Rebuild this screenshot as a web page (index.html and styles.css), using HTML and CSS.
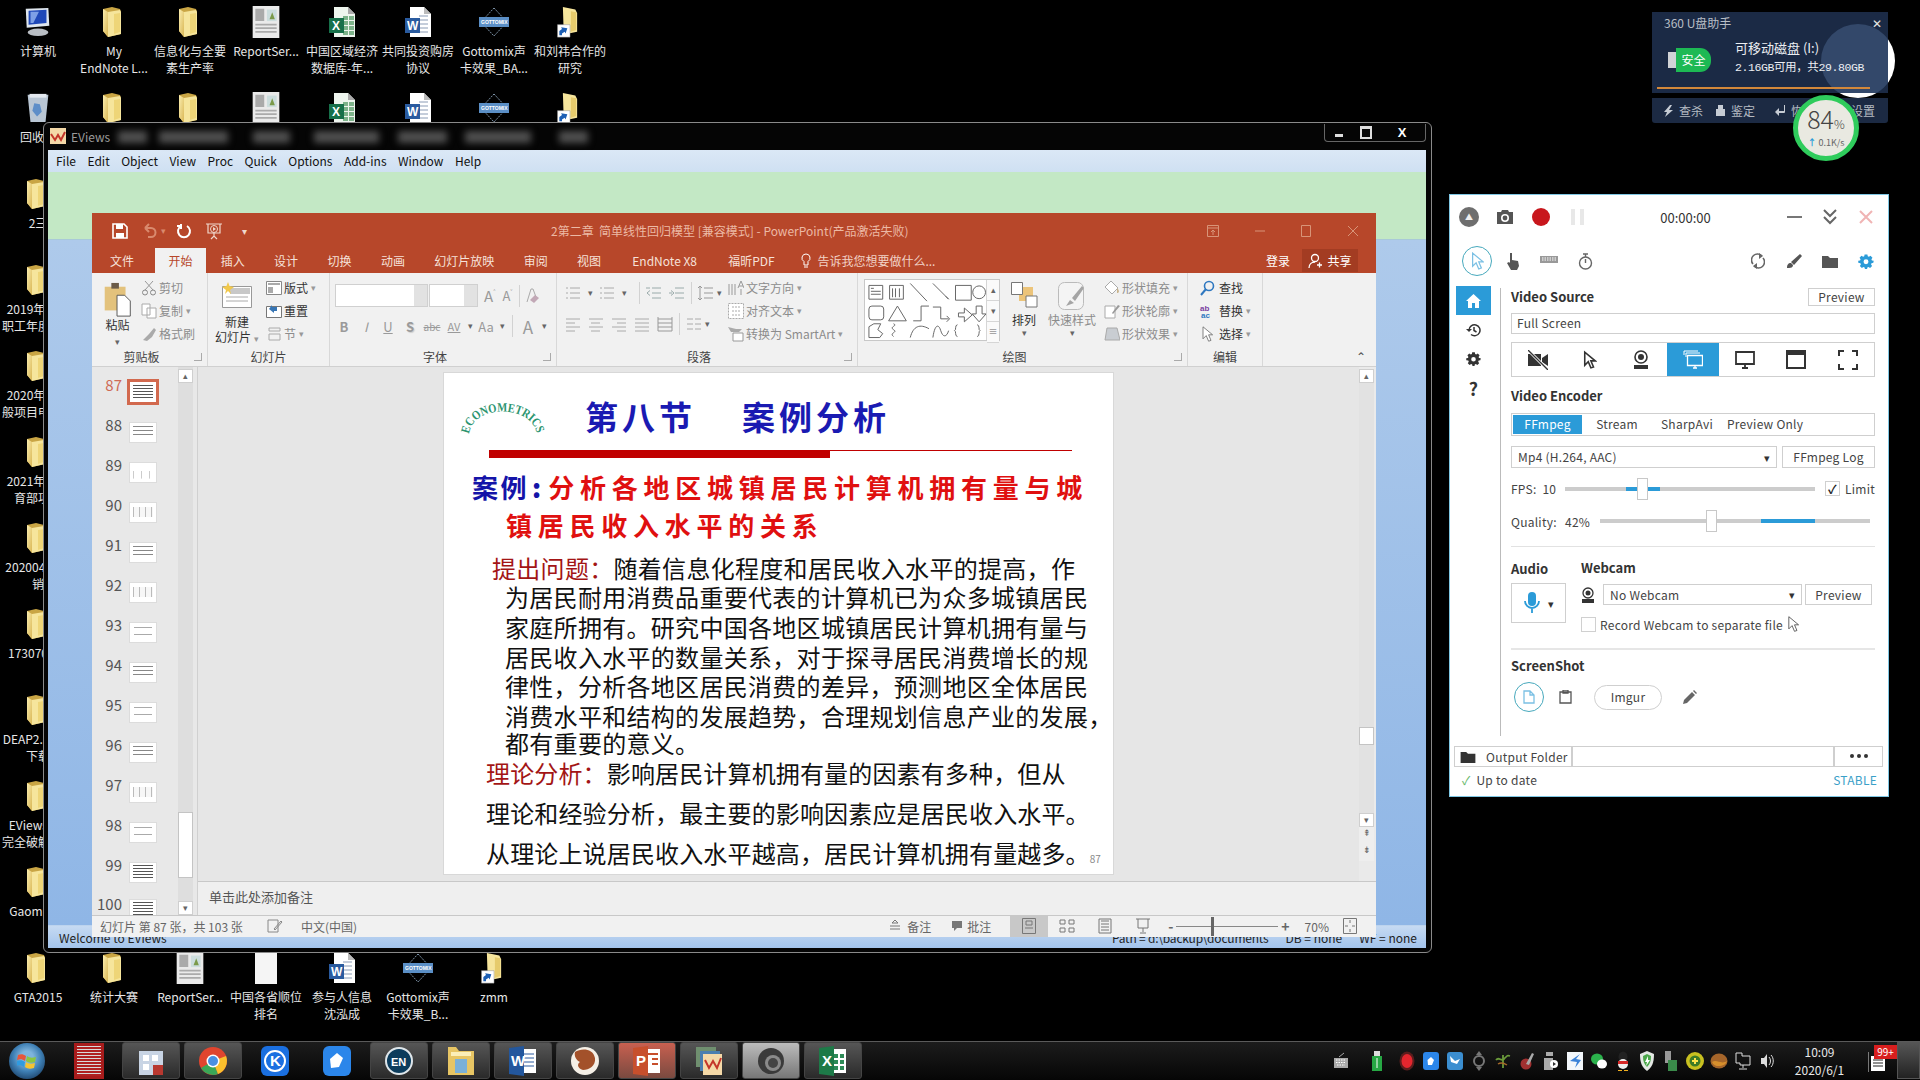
FILE: index.html
```html
<!DOCTYPE html>
<html lang="zh-CN">
<head>
<meta charset="utf-8">
<title>Desktop</title>
<link rel="stylesheet" href="styles.css">
</head>
<body>
<svg class="sprite" width="0" height="0">
  <defs>
    <linearGradient id="fg" x1="0" y1="0" x2="1" y2="1"><stop offset="0" stop-color="#fbeeb0"/><stop offset="1" stop-color="#d9b654"/></linearGradient>
    <symbol id="folder" viewBox="2 0 24 32"><path d="M3 3 12 1l8 2 1 3v22l-13 3-5-6z" fill="#c9a544"/><path d="M3 3l5 3v25l-5-6z" fill="url(#fg)"/><path d="M8 6l12-2 1 2v22L8 31z" fill="#f6e59c"/><path d="M14 8l6-1v19l-6 2z" fill="#eed578"/></symbol>
    <symbol id="flink" viewBox="0 0 30 36"><path d="M7 1l14 3 2 4v21l-15 3z" fill="#f6e59c"/><path d="M16 6l6 1v20l-6 2z" fill="#e6cb6c"/><path d="M1 21h14v14H1z" fill="#fff" stroke="#999" stroke-width=".6"/><path d="M3 33V28l3-2-1-2 7 1-2 6-1-2-3 2v2z" fill="#1d5fb4"/></symbol>
    <symbol id="word" viewBox="0 0 28 32"><path d="M6 1h14l7 7v23H6z" fill="#fff"/><path d="M20 1v7h7z" fill="#bbb"/><path d="M15 10h9M15 14h9M15 18h9M15 22h9M15 26h9" stroke="#8a9bb5"/><path d="M1 12h15v15H1z" fill="#2a5b9f"/><text x="3" y="24" class="svg-w">W</text></symbol>
    <symbol id="excel" viewBox="0 0 28 32"><path d="M6 1h14l7 7v23H6z" fill="#eef5ee"/><path d="M20 1v7h7z" fill="#aaa"/><path d="M15 10h5v4h-5zM21 10h5v4h-5zM15 15h5v4h-5zM21 15h5v4h-5zM15 20h5v4h-5zM21 20h5v4h-5zM15 25h5v4h-5zM21 25h5v4h-5z" fill="#7db38a"/><path d="M1 12h15v15H1z" fill="#17704a"/><text x="4" y="24" class="svg-w">X</text></symbol>
    <symbol id="report" viewBox="0 0 30 36"><path d="M0 0h30v36H0z" fill="#eaeaea"/><path d="M3 3h10v14H3zM3 20h24v2H3zM3 24h24v2H3zM3 28h24v2H3z" fill="#aaa"/><path d="M16 4h11v13H16z" fill="#cdd"/><path d="M19 15l3-8 3 8z" fill="#7b9a4a"/></symbol>
    <symbol id="gotto" viewBox="0 0 32 32"><path d="M16 2l13 14-13 14L3 16z" fill="none" stroke="#7d93a8" stroke-dasharray="2 1"/><path d="M1 11h30v10H1z" fill="#5b8fc6"/><text x="3" y="18" class="svg-g">GOTTOMIX</text></symbol>
    <symbol id="ic-cam" viewBox="0 0 20 20"><path d="M2 5h4l1-2h6l1 2h4v12H2z" fill="#555"/><circle cx="10" cy="11" r="4" fill="#fff"/><circle cx="10" cy="11" r="2.400" fill="#555"/></symbol>
    <symbol id="arrow" viewBox="0 0 16 20"><path d="M3 1v15l4-4 3 7 3-1-3-7h5z" fill="#fff" stroke="currentColor" stroke-width="1.400"/></symbol>
    <symbol id="gear" viewBox="0 0 20 20"><path fill="currentColor" fill-rule="evenodd" d="M8 1h4l.5 2.600 1.600.7L16.400 2.800l2.800 2.800-1.500 2.300.7 1.600L21 10l-.6 3-2.600.5-.7 1.600 1.500 2.300-2.800 2.800-2.300-1.500-1.600.7L11.500 22h-3l-.5-2.600-1.600-.7-2.300 1.500-2.800-2.800 1.500-2.300-.7-1.600L-1 13v-3l2.600-.5.7-1.600L.8 5.600 3.600 2.800l2.300 1.500 1.600-.7zM10 8a3.500 3.500 0 1 0 0 7 3.500 3.500 0 0 0 0-7z" transform="translate(1.200 .9) scale(.88)"/></symbol>
  </defs>
</svg>

<main class="screen">
  <section class="desktop">
    <div class="dicon"><svg class="di" viewBox="0 0 34 32"><path d="M4 2l24-1 1 19-24 2z" fill="#dfe6ee"/><path d="M7 4l19-1v14L7 19z" fill="#1f48b8"/><path d="M9 5l9 0-6 12H9z" fill="#7ea0e6"/><ellipse cx="17" cy="27" rx="11" ry="4" fill="#b9bec4"/></svg><span>计算机</span></div>
    <div class="dicon"><svg class="di"><use href="#folder"/></svg><span>My<br>EndNote L...</span></div>
    <div class="dicon"><svg class="di"><use href="#folder"/></svg><span>信息化与全要<br>素生产率</span></div>
    <div class="dicon"><svg class="di"><use href="#report"/></svg><span>ReportSer...</span></div>
    <div class="dicon"><svg class="di"><use href="#excel"/></svg><span>中国区域经济<br>数据库-年...</span></div>
    <div class="dicon"><svg class="di"><use href="#word"/></svg><span>共同投资购房<br>协议</span></div>
    <div class="dicon"><svg class="di"><use href="#gotto"/></svg><span>Gottomix声<br>卡效果_BA...</span></div>
    <div class="dicon"><svg class="di"><use href="#flink"/></svg><span>和刘祎合作的<br>研究</span></div>

    <div class="dicon"><svg class="di" viewBox="0 0 26 34"><path d="M2 3h22l-3 29H5z" fill="#b9c6d4"/><path d="M4 2h18v4H4z" fill="#e4e9ef"/><path d="M9 12l6 1 2 8-5 5-5-6z" fill="#5e8ec8"/></svg><span>回收站</span></div>
    <div class="dicon"><svg class="di"><use href="#folder"/></svg></div>
    <div class="dicon"><svg class="di"><use href="#folder"/></svg></div>
    <div class="dicon"><svg class="di"><use href="#report"/></svg></div>
    <div class="dicon"><svg class="di"><use href="#excel"/></svg></div>
    <div class="dicon"><svg class="di"><use href="#word"/></svg></div>
    <div class="dicon"><svg class="di"><use href="#gotto"/></svg></div>
    <div class="dicon"><svg class="di"><use href="#flink"/></svg></div>

    <div class="dicon c1"><svg class="di"><use href="#folder"/></svg><span>2三</span></div>
    <div class="dicon c1"><svg class="di"><use href="#folder"/></svg><span>2019年度教<br>职工年度考核</span></div>
    <div class="dicon c1"><svg class="di"><use href="#folder"/></svg><span>2020年度一<br>般项目申报书</span></div>
    <div class="dicon c1"><svg class="di"><use href="#folder"/></svg><span>2021年度教<br>育部项目</span></div>
    <div class="dicon c1"><svg class="di"><use href="#folder"/></svg><span>20200403销<br>销</span></div>
    <div class="dicon c1"><svg class="di"><use href="#folder"/></svg><span>173070012</span></div>
    <div class="dicon c1"><svg class="di"><use href="#folder"/></svg><span>DEAP2.1 Win<br>下载</span></div>
    <div class="dicon c1"><svg class="di"><use href="#folder"/></svg><span>EViews 9.0<br>完全破解版本</span></div>
    <div class="dicon c1"><svg class="di"><use href="#folder"/></svg><span>Gaomin20</span></div>

    <div class="dicon r12"><svg class="di"><use href="#folder"/></svg><span>GTA2015</span></div>
    <div class="dicon r12"><svg class="di"><use href="#folder"/></svg><span>统计大赛</span></div>
    <div class="dicon r12"><svg class="di"><use href="#report"/></svg><span>ReportSer...</span></div>
    <div class="dicon r12"><svg class="di" viewBox="0 0 24 32"><path d="M1 0h22v32H1z" fill="#f5f5f5"/></svg><span>中国各省顺位<br>排名</span></div>
    <div class="dicon r12"><svg class="di"><use href="#word"/></svg><span>参与人信息<br>沈泓成</span></div>
    <div class="dicon r12"><svg class="di"><use href="#gotto"/></svg><span>Gottomix声<br>卡效果_B...</span></div>
    <div class="dicon r12"><svg class="di"><use href="#flink"/></svg><span>zmm</span></div>
  </section>

  <!-- 360 widget -->
  <aside class="u360">
    <div class="u360-halo"></div>
    <div class="u360-top">
      <div class="u360-glass"></div>
      <div class="u360-title"><span>360 U盘助手</span><span class="u360-close">✕</span></div>
      <div class="u360-info">
        <div class="u360-badge"><i class="u360-plug"></i><b>安全</b></div>
        <div class="u360-disk"><p>可移动磁盘 (I:)</p><p class="u360-size">2.16GB可用，共29.80GB</p></div>
      </div>
      <div class="u360-bar"></div>
    </div>
    <div class="u360-bottom">
      <span class="ub-a"><svg width="9" height="12" viewBox="0 0 9 12"><path d="M6 0L0 7h3l-2 5 8-7H5l3-5z" fill="#c6ccd4"/></svg>查杀</span>
      <span class="ub-b"><svg width="9" height="11" viewBox="0 0 9 11"><path d="M2 0h5v4H2zM0 4h9v7H0z" fill="#c6ccd4"/></svg>鉴定</span>
      <span class="ub-c"><svg width="10" height="11" viewBox="0 0 10 11"><path d="M9 0v6H4V3L0 7l4 4V8h5a1 1 0 0 0 1-1V0z" fill="#c6ccd4"/></svg>恢复</span>
      <span class="ub-d">设置</span>
    </div>
    <div class="ball">
      <div class="ball-pct">84<small>%</small></div>
      <div class="ball-speed"><em>↑</em> 0.1K/s</div>
    </div>
  </aside>

  <!-- EViews window -->
  <section class="eviews">
    <header class="ev-title">
      <svg class="ev-logo" viewBox="0 0 16 16"><path d="M0 0h16v16H0z" fill="#f4d9a8"/><path d="M1 6l4 6 3-5 3 5 4-8" fill="none" stroke="#c4352a" stroke-width="2"/></svg>
      <span class="ev-name">EViews</span>
      <div class="ev-blurs"><i class="b1"></i><i class="b2"></i><i class="b3"></i><i class="b4"></i><i class="b5"></i><i class="b6"></i><i class="b7"></i></div>
      <div class="ev-ctrls"><span class="c-min"></span><span class="c-max"></span><span class="c-x">X</span></div>
    </header>
    <div class="ev-client">
      <nav class="ev-menu"><span>File</span><span>Edit</span><span>Object</span><span>View</span><span>Proc</span><span>Quick</span><span>Options</span><span>Add-ins</span><span>Window</span><span>Help</span></nav>
      <div class="ev-green"></div>
      <div class="ev-blue"></div>
      <footer class="ev-status"><span class="ev-s0">Welcome to EViews</span><span class="ev-s1">Path = d:\backup\documents</span><span class="ev-s2">DB = none</span><span class="ev-s3">WF = none</span></footer>
    </div>
  </section>

  <!-- PowerPoint window -->
  <section class="ppt">
    <header class="pp-title">
      <span class="qat"><svg width="16" height="16" viewBox="0 0 16 16"><path d="M1 1h11l3 3v11H1z" fill="none" stroke="#fff" stroke-width="1.600"/><path d="M4 1h7v5H4zM4 10h8v5H4z" fill="#fff"/></svg></span>
      <span class="qat dim"><svg width="16" height="16" viewBox="0 0 16 16"><path d="M3 5h6a4 4 0 0 1 0 9H6M3 5l4-4M3 5l4 4" fill="none" stroke="#d98a6e" stroke-width="2"/></svg><i class="qat-c">▾</i></span>
      <span class="qat"><svg width="16" height="16" viewBox="0 0 16 16"><path d="M11 3a6 6 0 1 1-6 0M5 1v5M1 3h5" fill="none" stroke="#fff" stroke-width="2"/></svg></span>
      <span class="qat"><svg width="18" height="18" viewBox="0 0 18 18"><path d="M1 2h16M3 2v9h12V2M9 11v3M6 17l3-3 3 3" fill="none" stroke="#f0d8cc" stroke-width="1.200"/><circle cx="9" cy="7" r="3.500" fill="none" stroke="#f0d8cc"/><path d="M8 5l3 2-3 2z" fill="#f0d8cc"/></svg></span>
      <span class="qat qat-more">▾</span>
      <h1 class="pp-doc">2第二章&nbsp; 简单线性回归模型 [兼容模式] - PowerPoint(产品激活失败)</h1>
      <div class="pp-ctrls">
        <span><svg width="12" height="12" viewBox="0 0 12 12"><path d="M.5.500h11v11H.5zM.5 3h11M6 10V5M4 7l2-2 2 2" fill="none" stroke="#d89478"/></svg></span>
        <span><svg width="12" height="12" viewBox="0 0 12 12"><path d="M1 6h10" stroke="#d89478"/></svg></span>
        <span><svg width="12" height="12" viewBox="0 0 12 12"><path d="M1.500.5h9v11h-9z" fill="none" stroke="#d89478"/></svg></span>
        <span><svg width="12" height="12" viewBox="0 0 12 12"><path d="M1 1l10 10M11 1L1 11" stroke="#d89478"/></svg></span>
      </div>
    </header>
    <nav class="pp-tabs">
      <span class="tab tab-file">文件</span><span class="tab tab-on">开始</span><span class="tab">插入</span><span class="tab">设计</span><span class="tab">切换</span><span class="tab">动画</span><span class="tab">幻灯片放映</span><span class="tab">审阅</span><span class="tab">视图</span><span class="tab tab-en">EndNote X8</span><span class="tab">福昕PDF</span>
      <span class="tell"><svg width="10" height="16" viewBox="0 0 10 16"><path d="M5 1a4 4 0 0 0-2 7.500V12h4V8.500A4 4 0 0 0 5 1zM3 14h4" fill="none" stroke="#fff"/></svg>告诉我您想要做什么...</span>
      <span class="login">登录</span>
      <span class="share"><svg width="14" height="16" viewBox="0 0 14 16"><circle cx="7" cy="5" r="3.500" fill="none" stroke="#fff" stroke-width="1.300"/><path d="M1 15c0-4 3-6 6-6M9 12h5M11.500 9.500v5" fill="none" stroke="#fff" stroke-width="1.300"/></svg>共享</span>
    </nav>

    <div class="ribbon">
      <div class="grp g1">
        <div class="grp-body">
          <div class="bigbtn paste">
            <svg width="29" height="38" viewBox="0 0 29 38"><path d="M1 5h22v25H1z" fill="#e3c27c"/><path d="M8 1h8v6H8z" fill="#6b5b48"/><path d="M14 14h8l6 6v16H14z" fill="#fff" stroke="#555"/></svg>
            <span class="blk">粘贴</span><i class="caret">▾</i>
          </div>
          <div class="rcol">
            <div class="rrow"><svg class="sic" viewBox="0 0 16 16"><path d="M4 1l8 9M12 1L4 10" stroke="#999" fill="none"/><circle cx="4" cy="12.500" r="2.500" fill="none" stroke="#888"/><circle cx="12" cy="12.500" r="2.500" fill="none" stroke="#888"/></svg>剪切</div>
            <div class="rrow"><svg class="sic" viewBox="0 0 16 16"><path d="M1 1h8v11H1zM6 5h9v10H6z" fill="#fff" stroke="#aaa"/></svg>复制<i class="caret side">▾</i></div>
            <div class="rrow"><svg class="sic" viewBox="0 0 16 16"><path d="M2 14l6-6 3 3-5 4zM8 8l5-6 2 2-4 7z" fill="#aaa"/></svg>格式刷</div>
          </div>
        </div>
        <div class="grp-label shifted">剪贴板<i class="launch"></i></div>
      </div>
      <div class="grp g2">
        <div class="grp-body">
          <div class="bigbtn newslide">
            <svg width="30" height="26" viewBox="0 0 30 26"><path d="M.5 4.500h29v21H.5z" fill="#fff" stroke="#999"/><path d="M8 6h20v6H8z" fill="#c8c8c8"/><path d="M4 15h22M4 19h22" stroke="#aaa"/><path d="M6 0l1.500 4L12 5 8 8 9 12 6 9 3 12l1-4L0 5l4.500-1z" fill="#f1c84b"/></svg>
            <span class="blk two">新建<br>幻灯片<i class="caret side">▾</i></span>
          </div>
          <div class="rcol">
            <div class="rrow blk"><svg class="sic" viewBox="0 0 16 16"><path d="M.5 1.500h15v13H.5z" fill="#fff" stroke="#888"/><path d="M2 3h12v2H2zM2 7h5v6H2z" fill="#aaa"/></svg>版式<i class="caret side">▾</i></div>
            <div class="rrow blk"><svg class="sic" viewBox="0 0 16 16"><path d="M.5 3.500h15v11H.5z" fill="#fff" stroke="#777"/><path d="M3 6l3-4v2h5v4H8v2z" fill="#3775b4"/></svg>重置</div>
            <div class="rrow"><svg class="sic" viewBox="0 0 16 16"><path d="M3 2h11v3H3zM3 8h11v6H3z" fill="none" stroke="#aaa"/></svg>节<i class="caret side">▾</i></div>
          </div>
        </div>
        <div class="grp-label">幻灯片</div>
      </div>
      <div class="grp g3">
        <div class="grp-body col">
          <div class="fontrow">
            <span class="fbox fname"><i></i></span><span class="fbox fsize"><i></i></span>
            <span class="fa a-up">A<sup>˄</sup></span><span class="fa a-dn">A<sup>˅</sup></span><span class="vsep s1"></span>
            <svg class="clear" width="16" height="16" viewBox="0 0 16 16"><path d="M3 14L7 1h2l3 8" fill="none" stroke="#aaa"/><path d="M6 12l5-5 4 3-5 5z" fill="#c2a8b6"/></svg>
          </div>
          <div class="stylerow">
            <b class="cell">B</b><i class="cell italic">I</i><u class="cell">U</u><span class="cell sh">S</span><span class="cell abc">abc</span><span class="cell av">AV</span><i class="caret w10">▾</i><span class="cell">Aa</span><i class="caret w10">▾</i><span class="vsep s2"></span><span class="cell big">A</span><i class="caret w10">▾</i>
          </div>
        </div>
        <div class="grp-label shifted">字体<i class="launch"></i></div>
      </div>
      <div class="grp g4">
        <div class="grp-body">
          <div class="col paraleft">
            <div class="pararow one">
              <svg class="pic" viewBox="0 0 16 16"><path d="M1 3h2M1 8h2M1 13h2M5 3h10M5 8h10M5 13h10" stroke="#aaa" fill="none"/></svg><i class="caret w14">▾</i>
              <svg class="pic" viewBox="0 0 16 16"><path d="M1 3h2M1 8h2M1 13h2M5 3h10M5 8h10M5 13h10" stroke="#aaa" fill="none"/></svg><i class="caret w14">▾</i>
              <span class="vsep"></span>
              <svg class="pic" viewBox="0 0 16 16"><path d="M6 3h9M6 8h9M6 13h9M0 3h4M4 5.500L1 8l3 2.500" stroke="#9aa" fill="none"/></svg>
              <svg class="pic m7" viewBox="0 0 16 16"><path d="M6 3h9M6 8h9M6 13h9M0 8h3M2 5.500L5 8l-3 2.500" stroke="#9aa" fill="none"/></svg>
              <span class="vsep"></span>
              <svg class="pic" viewBox="0 0 16 16"><path d="M6 3h9M6 8h9M6 13h9M2 1v14M0 3l2-2 2 2M0 13l2 2 2-2" stroke="#999" fill="none"/></svg><i class="caret w10">▾</i>
            </div>
            <div class="pararow two">
              <svg class="pic" viewBox="0 0 16 16"><path d="M1 3h14M1 7h9M1 11h14M1 15h9" stroke="#aaa"/></svg>
              <svg class="pic m7" viewBox="0 0 16 16"><path d="M1 3h14M3 7h9M1 11h14M3 15h9" stroke="#aaa"/></svg>
              <svg class="pic m7" viewBox="0 0 16 16"><path d="M1 3h14M6 7h9M1 11h14M6 15h9" stroke="#aaa"/></svg>
              <svg class="pic m7" viewBox="0 0 16 16"><path d="M1 3h14M1 7h14M1 11h14M1 15h14" stroke="#aaa"/></svg>
              <svg class="pic m7" viewBox="0 0 16 16"><path d="M1 3h14M1 7h14M1 11h14M1 15h14M1 1v14M15 1v14" stroke="#999"/></svg>
              <span class="vsep"></span>
              <svg class="pic" viewBox="0 0 16 16"><path d="M1 3h6M9 3h6M1 8h6M9 8h6M1 13h6M9 13h6" stroke="#aaa"/></svg><i class="caret w10">▾</i>
            </div>
          </div>
          <div class="rcol textcol">
            <div class="rrow"><svg class="sic" viewBox="0 0 16 16"><path d="M1 4v11M4 4v11M7 4v11M10 8l3-7 3 7M11 6h4M13 9v6" stroke="#999" fill="none"/></svg>文字方向<i class="caret side">▾</i></div>
            <div class="rrow"><svg class="sic" viewBox="0 0 16 16"><path d="M.5.500h15v15H.5zM4 4h8M4 8h8M4 12h8" fill="#fff" stroke="#aaa" stroke-dasharray="2 1"/></svg>对齐文本<i class="caret side">▾</i></div>
            <div class="rrow"><svg class="sic" viewBox="0 0 16 16"><path d="M0 1l8 2 6 0-3 3H3z" fill="#aaa"/><path d="M5 7h10v8H5z" fill="#fff" stroke="#999"/></svg>转换为 SmartArt<i class="caret side">▾</i></div>
          </div>
        </div>
        <div class="grp-label shifted">段落<i class="launch"></i></div>
      </div>
      <div class="grp g5">
        <div class="grp-body">
          <div class="gallery">
            <svg class="gal-svg" width="121" height="60" viewBox="0 0 123 60" fill="none" stroke="#666">
              <path d="M4 5h14v14H4zM6 8h3M6 11h10M6 14h10" /><path d="M25 5h14v14H25zM28 8v9M31 8v9M35 8v9"/><path d="M46 3l17 18M69 3l16 16M85 19l-3-3" /><path d="M92 5h16v15H92z"/><circle cx="116" cy="12" r="6.500"/>
              <rect x="4" y="26" width="15" height="14" rx="3"/><path d="M24 41l9-15 9 15zM49 41h8V26h8M69 27h8v12h8M83 36l3 3-3 3M95 33h6v-5l8 7-8 7v-5h-6zM113 26h6v8h4l-7 8-7-8h4z"/>
              <path d="M4 58V47l5-3h7l-3 6 5 4-3 4zM29 44c5 2-5 3 0 6s-5 3 0 7M46 58c3-12 10-14 19-9M69 58c2-14 6-14 8-7s6 7 8 0M94 45c-3 0-1 6-3 6 2 0 0 6 3 6M114 45c3 0 1 6 3 6-2 0 0 6-3 6"/>
            </svg>
            <div class="gscroll"><span>▴</span><span>▾</span><span>≡</span></div>
          </div>
          <div class="bigbtn arrange">
            <svg width="27" height="26" viewBox="0 0 27 26"><path d="M8 5h14v14H8z" fill="#ecc47a"/><path d="M.5.500h11v12H.5zM15 14h11v11H15z" fill="#fff" stroke="#777"/></svg>
            <span class="blk">排列</span><i class="caret">▾</i>
          </div>
          <div class="bigbtn quick">
            <svg width="28" height="28" viewBox="0 0 28 28"><rect x=".5" y=".5" width="25" height="27" rx="6" fill="#f4f4f4" stroke="#bbb"/><path d="M8 24l4-6 4 3zM14 16l10-12 2 2-9 13z" fill="#a5a5a5"/></svg>
            <span>快速样式</span><i class="caret">▾</i>
          </div>
          <div class="rcol shapecol">
            <div class="rrow"><svg class="sic" viewBox="0 0 16 16"><path d="M7 1l7 7-6 6-7-7z" fill="#fff" stroke="#aaa"/><path d="M13 8c3 3 2 5 0 5z" fill="#c9b48c"/></svg>形状填充<i class="caret side">▾</i></div>
            <div class="rrow"><svg class="sic" viewBox="0 0 16 16"><path d="M1 3h10v12H1z" fill="#fff" stroke="#aaa"/><path d="M8 10l6-8 2 1-7 8z" fill="#999"/></svg>形状轮廓<i class="caret side">▾</i></div>
            <div class="rrow"><svg class="sic" viewBox="0 0 16 16"><path d="M3 2h10l3 12H1z" fill="#c9cdd2" stroke="#aaa"/></svg>形状效果<i class="caret side">▾</i></div>
          </div>
        </div>
        <div class="grp-label shifted">绘图<i class="launch"></i></div>
      </div>
      <div class="grp g6">
        <div class="grp-body">
          <div class="rcol">
            <div class="rrow blk"><svg class="sic n" viewBox="0 0 16 16"><circle cx="10" cy="6" r="4.500" fill="none" stroke="#2f78c0" stroke-width="1.600"/><path d="M7 9l-5 6" stroke="#2f78c0" stroke-width="2"/></svg>查找</div>
            <div class="rrow blk"><svg class="sic n" viewBox="0 0 16 16"><text x="1" y="8" class="svg-ab">ab</text><text x="2" y="15" class="svg-ac">ac</text></svg>替换<i class="caret side">▾</i></div>
            <div class="rrow blk"><svg class="sic n" viewBox="0 0 16 20"><path d="M3 1v15l4-4 3 7 3-1-3-7h5z" fill="#fff" stroke="#666"/></svg>选择<i class="caret side">▾</i></div>
          </div>
        </div>
        <div class="grp-label">编辑</div>
      </div>
      <div class="collapse">⌃</div>
    </div>

    <div class="pp-work">
      <div class="thumbs">
        <div class="thumb-list">
          <div class="trow on"><b>87</b><span class="tmb t-dense"></span></div>
          <div class="trow"><b>88</b><span class="tmb t-text"></span></div>
          <div class="trow"><b>89</b><span class="tmb t-chart"></span></div>
          <div class="trow"><b>90</b><span class="tmb t-table"></span></div>
          <div class="trow"><b>91</b><span class="tmb t-text"></span></div>
          <div class="trow"><b>92</b><span class="tmb t-table"></span></div>
          <div class="trow"><b>93</b><span class="tmb t-few"></span></div>
          <div class="trow"><b>94</b><span class="tmb t-text"></span></div>
          <div class="trow"><b>95</b><span class="tmb t-few"></span></div>
          <div class="trow"><b>96</b><span class="tmb t-text"></span></div>
          <div class="trow"><b>97</b><span class="tmb t-table"></span></div>
          <div class="trow"><b>98</b><span class="tmb t-few"></span></div>
          <div class="trow"><b>99</b><span class="tmb t-dense"></span></div>
          <div class="trow last"><b>100</b><span class="tmb t-dense"></span></div>
        </div>
        <div class="vscroll">
          <span class="sbtn">▴</span>
          <div class="strack"><i class="sthumb"></i></div>
          <span class="sbtn">▾</span>
        </div>
      </div>
      <div class="pp-right">
        <div class="canvas">
          <article class="slide">
            <div class="s-head">
              <svg class="s-arc" width="76" height="34" viewBox="0 0 76 34"><path id="arcp" d="M4 32C8 2 66 2 72 32" fill="none"/><text class="svg-arc"><textPath href="#arcp" textLength="88" lengthAdjust="spacingAndGlyphs">ECONOMETRICS</textPath></text></svg>
              <h2 class="s-title"><span>第八节</span><span>案例分析</span></h2>
            </div>
            <div class="s-rule"><i></i><em></em></div>
            <div class="s-case"><span class="s-blue">案例</span><b class="s-colon">:</b><span class="s-red">分析各地区城镇居民计算机拥有量与城</span></div>
            <div class="s-case two"><span class="s-red">镇居民收入水平的关系</span></div>
            <div class="s-body">
              <p class="first"><span class="s-dark">提出问题：</span>随着信息化程度和居民收入水平的提高，作</p>
              <p>为居民耐用消费品重要代表的计算机已为众多城镇居民</p>
              <p>家庭所拥有。研究中国各地区城镇居民计算机拥有量与</p>
              <p>居民收入水平的数量关系，对于探寻居民消费增长的规</p>
              <p>律性，分析各地区居民消费的差异，预测地区全体居民</p>
              <p>消费水平和结构的发展趋势，合理规划信息产业的发展，</p>
              <p class="tight">都有重要的意义。</p>
            </div>
            <div class="s-theory">
              <p><span class="s-dark">理论分析：</span>影响居民计算机拥有量的因素有多种，但从</p>
              <p>理论和经验分析，最主要的影响因素应是居民收入水平。</p>
              <p>从理论上说居民收入水平越高，居民计算机拥有量越多。<small>87</small></p>
            </div>
          </article>
          <div class="vscroll main-scroll">
            <span class="sbtn">▴</span>
            <div class="strack light"><i class="sthumb small"></i></div>
            <span class="sbtn">▾</span>
            <span class="sbtn flat">⇞</span>
            <span class="sbtn flat">⇟</span>
          </div>
        </div>
        <div class="notes">单击此处添加备注</div>
      </div>
    </div>

    <footer class="pp-status">
      <span class="st-a">幻灯片 第 87 张，共 103 张</span>
      <svg class="st-b" width="16" height="14" viewBox="0 0 16 14"><path d="M1 1h10v12H1zM7 10l7-8 1 1-7 8z" fill="none" stroke="#888"/></svg>
      <span class="st-c">中文(中国)</span>
      <span class="st-note"><svg width="10" height="12" viewBox="0 0 10 12"><path d="M5 0L2 3h6zM0 6h10M0 9h10" fill="none" stroke="#777"/></svg>备注</span>
      <span class="st-cmt"><svg width="10" height="12" viewBox="0 0 10 12"><path d="M0 1h10v7H5l-3 3V8H0z" fill="#777"/></svg>批注</span>
      <span class="vb on"><svg width="14" height="16" viewBox="0 0 14 16"><path d="M.5.500h13v15H.5zM4 3h6v4H4zM3 10h8" fill="none" stroke="#777"/></svg></span>
      <span class="vb"><svg width="16" height="14" viewBox="0 0 16 14"><path d="M1 1h5v4H1zM10 1h5v4h-5zM1 9h5v4H1zM10 9h5v4h-5z" fill="none" stroke="#777"/></svg></span>
      <span class="vb"><svg width="14" height="16" viewBox="0 0 14 16"><path d="M1 1h12v14H1zM3 3h8M3 6h8M3 9h8M3 12h8" fill="none" stroke="#777"/></svg></span>
      <span class="vb"><svg width="14" height="16" viewBox="0 0 14 16"><path d="M0 1h14M2 1v9h10V1M7 10v4M4 15h6" fill="none" stroke="#777"/></svg></span>
      <span class="zm"><b>-</b><span class="zm-track"><i></i></span><b>+</b></span>
      <span class="zm-pct">70%</span>
      <svg class="zm-fit" width="14" height="16" viewBox="0 0 14 16"><path d="M.5.500h13v15H.5zM7 2v3M7 11v3M2 8h3M9 8h3" fill="none" stroke="#777"/></svg>
    </footer>
  </section>

  <!-- Recorder window -->
  <section class="rec">
    <div class="rec-top">
      <span class="rc"><i class="rc-up">▲</i></span>
      <span class="rc"><svg width="20" height="20"><use href="#ic-cam"/></svg></span>
      <span class="rc"><i class="rc-red"></i></span>
      <span class="rc"><i class="rc-pause"></i></span>
      <span class="rec-time">00:00:00</span>
      <span class="rc"><i class="rc-min"></i></span>
      <span class="rc"><svg width="16" height="16" viewBox="0 0 16 16"><path d="M2 1l6 6 6-6M2 8l6 6 6-6" fill="none" stroke="#666" stroke-width="2"/></svg></span>
      <span class="rc"><svg width="16" height="16" viewBox="0 0 16 16"><path d="M2 2l12 12M14 2L2 14" stroke="#f0b4b4" stroke-width="2"/></svg></span>
    </div>
    <div class="rec-tools">
      <span class="rc ringed"><svg class="blue-ic" width="14" height="18"><use href="#arrow"/></svg></span>
      <span class="rc"><svg width="16" height="18" viewBox="0 0 16 18"><path d="M5 1h2v7l6 1 1 5-2 4H6L2 11l2-1 1 1z" fill="#555"/></svg></span>
      <span class="rc"><svg width="18" height="10" viewBox="0 0 18 10"><path d="M0 0h18v7H0z" fill="#999"/><path d="M2 2h14M2 4h14M5 8.500h8" stroke="#fff" stroke-dasharray="1.500 1"/></svg></span>
      <span class="rc"><svg width="15" height="17" viewBox="0 0 15 17"><circle cx="7.500" cy="10" r="6" fill="none" stroke="#666" stroke-width="1.400"/><path d="M5 1h5M7.500 1v3M7.500 10V6" stroke="#666" stroke-width="1.400"/></svg></span>
      <span class="rspace"></span>
      <span class="rc"><svg width="14" height="16" viewBox="0 0 14 16"><path d="M2 11a6 6 0 0 1 9-8M12 5a6 6 0 0 1-9 8" fill="none" stroke="#666" stroke-width="1.600"/><path d="M8 0l4 3-4 3zM6 10l-4 3 4 3z" fill="#666"/></svg></span>
      <span class="rc"><svg width="16" height="16" viewBox="0 0 16 16"><path d="M5 9l9-8 2 2-8 9zM1 15c0-3 1-5 4-5l2 2c0 3-3 3-6 3z" fill="#555"/></svg></span>
      <span class="rc"><svg width="16" height="13" viewBox="0 0 16 13"><path d="M0 1h6l2 2h8v10H0z" fill="#555"/></svg></span>
      <span class="rc gear-blue"><svg width="16" height="16"><use href="#gear"/></svg></span>
    </div>
    <div class="rec-body">
      <aside class="rec-side">
        <span class="rs on"><svg width="15" height="14" viewBox="0 0 15 14"><path d="M7.500 0L0 7h2v7h4V9h3v5h4V7h2z" fill="#fff"/></svg></span>
        <span class="rs"><svg width="15" height="14" viewBox="0 0 15 14"><path d="M3 7a5.500 5.500 0 1 1 2 4.500M8 4v3.500l2.500 1.500" fill="none" stroke="#333" stroke-width="1.500"/><path d="M0 6l3 3 3-3z" fill="#333"/></svg></span>
        <span class="rs dark"><svg width="15" height="15"><use href="#gear"/></svg></span>
        <span class="rs qm">?</span>
      </aside>
      <div class="rec-main">
        <div class="r-head"><b>Video Source</b><span class="btn b-prev">Preview</span></div>
        <div class="r-input">Full Screen</div>
        <div class="r-icons">
          <span><svg width="20" height="20" viewBox="0 0 20 20"><path d="M0 4h13v12H0zM14 8l6-4v12l-6-4z" fill="#333"/><path d="M0 0l20 20" stroke="#fff" stroke-width="3"/><path d="M0 0l20 20" stroke="#333" stroke-width="1.300"/></svg></span>
          <span><svg width="14" height="20" viewBox="0 0 16 20"><path d="M2 1v15l4-4 3 7 3-1-3-7h5z" fill="#fff" stroke="#333" stroke-width="1.800"/></svg></span>
          <span><svg width="16" height="20" viewBox="0 0 16 20"><circle cx="8" cy="7" r="6" fill="none" stroke="#333" stroke-width="1.600"/><circle cx="8" cy="7" r="3" fill="#333"/><path d="M1 15h14v4H1z" fill="#333"/></svg></span>
          <span class="on"><svg width="20" height="20" viewBox="0 0 20 20"><path d="M1 5V1h14M3 7V3h14" fill="none" stroke="#fff"/><path d="M4.500 5.500h15v10h-15zM10 18h4M12 15.500V18" fill="none" stroke="#fff" stroke-width="1.300"/></svg></span>
          <span><svg width="20" height="18" viewBox="0 0 20 18"><path d="M1 1h18v12H1zM7 17h6M10 13v4" fill="none" stroke="#333" stroke-width="1.800"/></svg></span>
          <span><svg width="20" height="19" viewBox="0 0 20 19"><path d="M1 2h18v16H1z" fill="none" stroke="#333" stroke-width="2"/><path d="M0 0h20v5H0z" fill="#333"/></svg></span>
          <span><svg width="20" height="20" viewBox="0 0 20 20"><path d="M1 6V1h5M14 1h5v5M19 14v5h-5M6 19H1v-5" fill="none" stroke="#333" stroke-width="2"/></svg></span>
        </div>
        <div class="r-sub"><b>Video Encoder</b></div>
        <div class="r-tabs"><span class="on">FFmpeg</span><span>Stream</span><span>SharpAvi</span><span class="wide">Preview Only</span></div>
        <div class="r-sel-row">
          <div class="r-select">Mp4 (H.264, AAC)<i>▾</i></div>
          <span class="btn b-log">FFmpeg Log</span>
        </div>
        <div class="r-fps">
          <span class="lab">FPS:&nbsp; 10</span>
          <div class="slider s-fps"><i class="fill"></i><i class="knob"></i></div>
          <span class="chk on">✓</span><span>Limit</span>
        </div>
        <div class="r-qual">
          <span class="lab">Quality:</span><span class="qval">42%</span>
          <div class="slider s-q"><i class="fill"></i><i class="knob"></i></div>
        </div>
        <hr class="r-hr">
        <div class="r-av">
          <div class="r-audio">
            <b>Audio</b>
            <span class="mic"><svg width="16" height="22" viewBox="0 0 16 22"><rect x="4" y="0" width="8" height="14" rx="4" fill="#2b9bd8"/><path d="M1 9a7 7 0 0 0 14 0M8 16v5" fill="none" stroke="#2b9bd8" stroke-width="1.800"/></svg><i>▾</i></span>
          </div>
          <div class="r-webcam">
            <b>Webcam</b>
            <div class="wc-row">
              <svg width="14" height="16" viewBox="0 0 14 16"><circle cx="7" cy="6" r="5" fill="none" stroke="#333" stroke-width="1.300"/><circle cx="7" cy="6" r="2.500" fill="#333"/><path d="M1 12h12v4H1z" fill="#333"/></svg>
              <div class="r-select wc">No Webcam<i>▾</i></div>
              <span class="btn b-wprev">Preview</span>
            </div>
            <div class="wc-check"><span class="chk"></span>Record Webcam to separate file</div>
          </div>
        </div>
        <hr class="r-hr thick">
        <b class="r-shot">ScreenShot</b>
        <div class="r-shots">
          <span class="rc ringed"><svg width="12" height="14" viewBox="0 0 12 14"><path d="M1 1h6l4 4v8H1zM7 1v4h4" fill="none" stroke="#7bc0e4" stroke-width="1.300"/></svg></span>
          <span class="rc shot2"><svg width="13" height="14" viewBox="0 0 13 14"><path d="M1 2h11v11H1zM4 0h5v3H4z" fill="none" stroke="#555" stroke-width="1.300"/></svg></span>
          <span class="pill">Imgur</span>
          <svg class="pencil" width="14" height="14" viewBox="0 0 14 14"><path d="M0 14l1-4 8-8 3 3-8 8zM10 1l1-1 3 3-1 1z" fill="#666"/></svg>
        </div>
      </div>
    </div>
    <div class="rec-out">
      <span class="out-a"><svg width="16" height="12" viewBox="0 0 16 13"><path d="M0 1h6l2 2h8v10H0z" fill="#333"/></svg>Output Folder</span>
      <span class="out-b"></span>
      <span class="out-c"><i></i><i></i><i></i></span>
    </div>
    <div class="rec-stat"><span class="ok">✓</span><span>Up to date</span><span class="stable">STABLE</span></div>
    <svg class="cursor" width="13" height="20" viewBox="0 0 16 20"><path d="M1 1v15l4-4 3 7 3-1-3-7h5z" fill="#fff" stroke="#444"/></svg>
  </section>

  <!-- Taskbar -->
  <footer class="taskbar">
    <span class="orb"><svg width="20" height="18" viewBox="0 0 20 18"><path d="M1 3c3-1 5-1 8 1l-1 5C5 7 3 7 0 8z" fill="#e8553a"/><path d="M10 4c3 2 5 2 9 1l-1 5c-4 1-6 1-9-1z" fill="#8cc63f"/><path d="M0 9c3-1 5-1 8 1l-1 5c-3-2-5-2-8-1z" fill="#2f9be0"/><path d="M9 10c3 2 5 2 9 1l-1 5c-4 1-6 1-9-1z" fill="#f6c431"/></svg></span>
    <div class="tb-apps">
      <span class="app"><i class="a-grid"></i></span>
      <span class="app bg"><svg width="26" height="30" viewBox="0 0 26 30"><path d="M1 5h24v24H1z" fill="#c8d4e4"/><path d="M5 9h6v6H5zM14 9h6v6h-6zM5 18h6v6H5z" fill="#fff"/><path d="M15 19h10v10H15z" fill="#b83830"/></svg></span>
      <span class="app bg"><svg width="30" height="30" viewBox="0 0 30 30"><circle cx="15" cy="15" r="14" fill="#e0452f"/><path d="M15 15L3 22A14 14 0 0 0 20 28z" fill="#3aa757"/><path d="M15 15l13-5a14 14 0 0 1-8 18z" fill="#fbc02d"/><circle cx="15" cy="15" r="6.500" fill="#fff"/><circle cx="15" cy="15" r="5" fill="#4a90e2"/></svg></span>
      <span class="app"><svg width="30" height="32" viewBox="0 0 30 32"><rect x="1" y="1" width="28" height="30" rx="6" fill="#1a6fe0"/><circle cx="15" cy="16" r="10" fill="none" stroke="#fff" stroke-width="2"/><text x="10" y="21" class="svg-k">K</text></svg></span>
      <span class="app"><svg width="30" height="32" viewBox="0 0 30 32"><rect x="1" y="1" width="28" height="30" rx="6" fill="#2b86ea"/><path d="M9 23l-1-9 7-6 6 5-4 9z" fill="#fff"/></svg></span>
      <span class="app bg"><svg width="30" height="30" viewBox="0 0 30 30"><circle cx="15" cy="15" r="13" fill="#0c3c5c" stroke="#dfe6ea" stroke-width="2"/><text x="7" y="20" class="svg-en">EN</text></svg></span>
      <span class="app bg"><svg width="30" height="32" viewBox="0 0 30 32"><path d="M2 2h8l3 4h15v24H2z" fill="#e7c564"/><path d="M9 14h12v14H9z" fill="#7ab0d8"/><path d="M5 7h20v4H5z" fill="#fbeeb8"/></svg></span>
      <span class="app bg"><svg width="28" height="30" viewBox="0 0 28 30"><path d="M9 3h18v24H9z" fill="#fff"/><path d="M15 8h10M15 12h10M15 16h10M15 20h10" stroke="#2a5b9f"/><path d="M0 2l15-2v30L0 28z" fill="#23579d"/><text x="2" y="20" class="svg-bw">W</text></svg></span>
      <span class="app bg"><svg width="30" height="30" viewBox="0 0 30 30"><circle cx="15" cy="15" r="14" fill="#f4efe6"/><path d="M5 6c6-4 18-4 20 6 1 8-6 12-12 12-6-2-6-6-3-8-4-2-6-6-5-10z" fill="#a3512a"/></svg></span>
      <span class="app bg red"><svg width="28" height="30" viewBox="0 0 28 30"><path d="M11 3h16v24H11z" fill="#fff"/><path d="M15 8h10M19 13h6M19 18h6" stroke="#c74f2c" stroke-width="2"/><path d="M0 2l15-2v30L0 28z" fill="#c74f2c"/><text x="3" y="20" class="svg-bw">P</text></svg></span>
      <span class="app bg"><svg width="28" height="30" viewBox="0 0 28 30"><path d="M1 1h20v20H1z" fill="#6f8f6f"/><path d="M5 5h20v20H5z" fill="#4a7fb0"/><path d="M8 8h19v21H8z" fill="#f4d9a8"/><path d="M10 14l4 8 4-7 4 7 4-10" fill="none" stroke="#c4352a" stroke-width="2"/></svg></span>
      <span class="app bg light"><svg width="30" height="30" viewBox="0 0 30 30"><circle cx="15" cy="15" r="13" fill="#3a3a3a"/><circle cx="17" cy="17" r="8" fill="#8a8a8a"/><circle cx="17" cy="17" r="5" fill="#444"/></svg></span>
      <span class="app bg"><svg width="28" height="30" viewBox="0 0 28 30"><path d="M9 3h18v24H9z" fill="#fff"/><path d="M15 8h4v4h-4zM21 8h4v4h-4zM15 14h4v4h-4zM21 14h4v4h-4zM15 20h4v4h-4zM21 20h4v4h-4z" fill="#2e8b57"/><path d="M0 2l15-2v30L0 28z" fill="#1d7a48"/><text x="3" y="20" class="svg-bw">X</text></svg></span>
    </div>
    <div class="tray">
      <span class="ti t-key"><svg width="16" height="18" viewBox="0 0 16 18"><path d="M1 6h14v10H1z" fill="#aaa"/><path d="M3 8h10M3 10.500h10M4 13h8" stroke="#fff" stroke-dasharray="1.500 1"/><path d="M6 5l5-4" stroke="#aaa"/></svg></span>
      <span class="ti t-usb"><svg width="12" height="20" viewBox="0 0 12 20"><path d="M3 0h6v5H3z" fill="#ddd"/><path d="M1 5h10v15H1z" fill="#27a844"/><path d="M6 7v10" stroke="#fff"/></svg></span>
      <span class="ti"><svg width="16" height="20" viewBox="0 0 16 20"><ellipse cx="8" cy="10" rx="7.500" ry="9.500" fill="#5b1d1d"/><ellipse cx="8" cy="10" rx="5.500" ry="7" fill="#e3262e"/></svg></span>
      <span class="ti"><svg width="16" height="18" viewBox="0 0 16 18"><rect width="16" height="18" rx="3" fill="#2b86ea"/><path d="M5 13l-.5-5 3.500-3 3 3-2 5z" fill="#fff"/></svg></span>
      <span class="ti"><svg width="16" height="18" viewBox="0 0 16 18"><rect width="16" height="18" rx="3" fill="#3b8ed0"/><path d="M3 4l5 5 5-2-3 5-6-2z" fill="#fff"/></svg></span>
      <span class="ti"><svg width="14" height="20" viewBox="0 0 14 20"><path d="M7 0l3 4H4zM7 20l-3-4h6z" fill="#777"/><circle cx="7" cy="10" r="5" fill="none" stroke="#777" stroke-width="2"/></svg></span>
      <span class="ti"><svg width="16" height="16" viewBox="0 0 16 16"><path d="M1 7c3-4 5 2 8-1s3-4 6-3M8 2v13" fill="none" stroke="#6a9a3a" stroke-width="1.800"/><path d="M3 11c3-2 6-1 9 1" fill="none" stroke="#a66a2a" stroke-width="1.500"/></svg></span>
      <span class="ti"><svg width="14" height="18" viewBox="0 0 14 18"><circle cx="6" cy="12" r="5.500" fill="#a03030"/><path d="M6 12l6-11 2 1-5 11z" fill="#aaa"/></svg></span>
      <span class="ti"><svg width="14" height="18" viewBox="0 0 14 18"><path d="M2 0h7v4H2zM0 6h9v12H0z" fill="#aaa"/><circle cx="10" cy="12" r="4" fill="#fff"/><path d="M9 10l3 2-3 2z" fill="#333"/></svg></span>
      <span class="ti"><svg width="16" height="18" viewBox="0 0 16 18"><path d="M0 0h16v18H0z" fill="#f3f7fb"/><path d="M13 2L3 9l7 1-2 6 6-8-5-1z" fill="#3b82d8"/></svg></span>
      <span class="ti"><svg width="16" height="16" viewBox="0 0 16 16"><ellipse cx="6" cy="6" rx="6" ry="5.500" fill="#2bb24c"/><ellipse cx="11" cy="11" rx="5" ry="4.500" fill="#fff"/></svg></span>
      <span class="ti"><svg width="14" height="20" viewBox="0 0 14 20"><ellipse cx="7" cy="6" rx="4.500" ry="5.500" fill="#222"/><ellipse cx="7" cy="13" rx="5" ry="5" fill="#eee"/><path d="M2 10h10v3H2z" fill="#d62828"/><path d="M2 19h4v1H2zM8 19h4v1H8z" fill="#f2b01e"/></svg></span>
      <span class="ti"><svg width="16" height="20" viewBox="0 0 16 20"><path d="M8 0l7 3c0 9-2 13-7 17C3 16 1 12 1 3z" fill="#e4e8e4"/><path d="M8 3l4 2c0 5-1 8-4 11-3-3-4-6-4-11z" fill="#4aa74a"/><path d="M9 5L6 11h2l-1 4 4-6H9z" fill="#fff"/></svg></span>
      <span class="ti"><svg width="14" height="20" viewBox="0 0 14 20"><path d="M1 0h6v12H1z" fill="#999"/><path d="M4 9h9v11H4z" fill="#3a8a4a"/></svg></span>
      <span class="ti"><svg width="18" height="18" viewBox="0 0 18 18"><circle cx="9" cy="9" r="9" fill="#c8c020"/><circle cx="9" cy="9" r="5.500" fill="#3d7a26"/><path d="M6 9h6M9 6v6" stroke="#ffe34a" stroke-width="2"/></svg></span>
      <span class="ti"><svg width="18" height="16" viewBox="0 0 18 16"><ellipse cx="9" cy="8" rx="8.500" ry="7.500" fill="#a5652a"/><path d="M2 9c5-3 9 3 15-1-1 5-12 8-15 1z" fill="#d68f2c"/></svg></span>
      <span class="ti"><svg width="16" height="18" viewBox="0 0 16 18"><path d="M1 1h6v3h8v9H5v-2H1z" fill="#111" stroke="#ddd"/><path d="M8 13v3M4 17h8" stroke="#ddd"/></svg></span>
      <span class="ti"><svg width="14" height="18" viewBox="0 0 14 18"><path d="M1 6h3l3-4v14l-3-4H1z" fill="#ddd"/><path d="M9 5c2 2 2 6 0 8M11 3c3 3 3 9 0 12" fill="none" stroke="#ddd"/></svg></span>
      <div class="clock"><span>10:09</span><span>2020/6/1</span></div>
      <span class="notif"><svg width="18" height="22" viewBox="0 0 18 22"><path d="M0 2v20" stroke="#ddd"/><path d="M3 6h14v15H3z" fill="#fff"/><path d="M5 10h10M5 13h10M5 16h10" stroke="#222"/></svg><b>99+</b></span>
      <span class="showdesk"></span>
    </div>
  </footer>
</main>
</body>
</html>
```

FILE: styles.css
```css
* { box-sizing: border-box; }
html, body { margin: 0; padding: 0; background: #000; }
body { font-family: "Noto Sans CJK SC", "Noto Sans", sans-serif; }
p, h1, h2 { margin: 0; font-weight: 400; }
i, em { font-style: normal; }
.sprite { position: absolute; }
.screen { position: relative; width: 1920px; height: 1080px; overflow: hidden; background: #000; }

.svg-w { font: 700 12px "Liberation Sans", sans-serif; fill: #fff; }
.svg-g { font: 700 5px "Liberation Sans", sans-serif; fill: #fff; }
.svg-ab { font: 700 8px "Liberation Sans", sans-serif; fill: #7a3fa0; }
.svg-ac { font: 700 8px "Liberation Sans", sans-serif; fill: #2f78c0; }
.svg-k { font: 700 15px "Liberation Sans", sans-serif; fill: #fff; }
.svg-en { font: 700 11px "Liberation Sans", sans-serif; fill: #fff; }
.svg-bw { font: 700 15px "Liberation Sans", sans-serif; fill: #fff; }
.svg-arc { font: 700 12.500px "Liberation Serif", serif; fill: #2c9570; }

/* Desktop */
.desktop { position: absolute; left: 0; top: 0; display: grid; grid-template-columns: repeat(8, 76px); grid-auto-rows: 86px; }
.dicon { display: flex; flex-direction: column; align-items: center; padding-top: 6px; color: #e6e6e6; font-size: 12px; line-height: 17px; text-align: center; white-space: nowrap; min-width: 0; }
.dicon span { margin-top: 4px; display: block; }
.di { width: 32px; height: 32px; display: block; flex: none; }
.c1 { grid-column: 1; }
.r12 { grid-row: 12; }

/* 360 */
.u360 { position: absolute; left: 1652px; top: 12px; width: 236px; height: 111px; color: #cfd4da; }
.u360-halo { position: absolute; left: 169px; top: 12px; width: 74px; height: 74px; border-radius: 50%; background: #fff; }
.u360-top { position: relative; height: 81px; background: #1b2a45; overflow: hidden; }
.u360-glass { position: absolute; left: 169px; top: 12px; width: 74px; height: 74px; border-radius: 50%; background: #33486a; }
.u360-title { position: relative; display: flex; justify-content: space-between; padding: 2px 6px 0 12px; font-size: 12px; line-height: 18px; color: #b8bec6; }
.u360-close { font-size: 12px; color: #e6e6e6; }
.u360-info { position: relative; display: flex; padding: 6px 0 0 16px; }
.u360-badge { display: flex; align-items: center; width: 43px; height: 24px; margin-top: 10px; }
.u360-plug { width: 8px; height: 16px; background: #d0d3d6; }
.u360-badge b { flex: 1; height: 24px; background: #1db954; border-radius: 0 11px 11px 0; color: #fff; font-size: 12px; font-weight: 400; line-height: 24px; text-align: center; }
.u360-disk { margin-left: 24px; color: #eceff3; font-size: 13px; line-height: 20px; }
.u360-size { font-size: 11.500px; font-family: "Liberation Mono", "Noto Sans CJK SC", monospace; letter-spacing: -.4px; }
.u360-bar { position: absolute; left: 5px; top: 75px; width: 213px; height: 2px; background: #d3883a; }
.u360-bottom { position: relative; margin-top: 5px; height: 25px; padding: 0 13px 0 12px; background: #1c2a43; border-radius: 0 0 3px 3px; display: flex; align-items: center; font-size: 12px; color: #b4bac2; }
.u360-bottom span { display: flex; align-items: center; gap: 6px; }
.ub-a { width: 52px; } .ub-b { width: 59px; } .ub-d { margin-left: auto; }
.ball { position: absolute; left: 141px; top: 83px; width: 66px; height: 66px; border-radius: 50%; background: #e9e9e1; border: 5px solid #2fcc5c; color: #444; text-align: center; display: flex; flex-direction: column; align-items: center; justify-content: center; }
.ball-pct { font-size: 25px; line-height: 26px; font-weight: 300; margin-top: -3px; }
.ball-pct small { font-size: 12px; }
.ball-speed { font-size: 9px; line-height: 12px; color: #666; }
.ball-speed em { color: #2b9bd8; font-weight: 700; }

/* EViews */
.eviews { position: absolute; left: 43px; top: 122px; width: 1389px; height: 831px; background: #050505; border: 1px solid #8a8a8a; border-radius: 6px; padding: 0 5px 4px 4px; display: flex; flex-direction: column; }
.ev-title { position: relative; height: 27px; flex: none; display: flex; align-items: center; padding-left: 2px; padding-bottom: 1px; }
.ev-logo { width: 16px; height: 16px; }
.ev-name { margin-left: 5px; font-size: 12px; color: #9a9a9a; }
.ev-blurs { position: absolute; left: 0; top: 8px; width: 100%; height: 12px; filter: blur(3.500px); }
.ev-blurs i { position: absolute; top: 0; height: 12px; background: #505050; }
.b1 { left: 70px; width: 29px; } .b2 { left: 111px; width: 69px; } .b3 { left: 205px; width: 37px; }
.b4 { left: 266px; width: 65px; } .b5 { left: 350px; width: 49px; } .b6 { left: 417px; width: 66px; } .b7 { left: 511px; width: 29px; }
.ev-ctrls { position: absolute; right: 0; top: 1px; width: 102px; height: 18px; border: 1px solid #666; border-top: 0; border-radius: 0 0 4px 4px; display: flex; align-items: center; color: #fff; }
.ev-ctrls span { display: flex; align-items: center; justify-content: center; }
.c-min { width: 27px; } .c-min::before { content: ""; width: 8px; height: 3px; background: #ddd; margin-top: 6px; }
.c-max { width: 27px; } .c-max::before { content: ""; width: 8px; height: 8px; border: 2px solid #ddd; border-top-width: 3px; }
.c-x { flex: 1; font: 700 13px "Liberation Sans", sans-serif; }
.ev-client { flex: 1; display: flex; flex-direction: column; min-height: 0; }
.ev-menu { height: 22px; flex: none; display: flex; align-items: center; gap: 11.500px; padding: 0 0 2px 8px; font-size: 12px; color: #111; background: linear-gradient(#dbe8f6, #cfe0f2); }
.ev-green { height: 68px; flex: none; background: #c3e8c5; border-bottom: 1px solid #a9c9d8; }
.ev-blue { flex: 1; background: linear-gradient(#aecaeb, #8fb6e6); }
.ev-status { height: 23px; flex: none; background: linear-gradient(#c6daf2, #a3c4ec); display: flex; align-items: center; padding-top: 1px; font-size: 12px; color: #222; position: relative; border-top: 1px solid #bcd3ee; }
.ev-s0 { margin-left: 11px; }
.ev-s1 { margin-left: auto; letter-spacing: -.2px; } .ev-s2 { margin-left: 17px; } .ev-s3 { margin-left: 17px; margin-right: 9px; }

/* PowerPoint */
.ppt { position: absolute; left: 92px; top: 213px; width: 1284px; height: 724px; display: flex; flex-direction: column; background: #f1f1f1; color: #444; font-size: 12px; }
.pp-title { height: 35px; flex: none; background: #b7472a; display: flex; align-items: center; padding-left: 13px; }
.qat { width: 30px; display: flex; justify-content: center; align-items: center; color: #f0d8cc; font-size: 10px; position: relative; }
.qat-c { position: absolute; right: -1px; color: #d98a6e; font-size: 9px; }
.qat.dim { margin-right: 4px; }
.pp-doc { margin-left: 292px; font-size: 12px; line-height: 16px; color: #ecb9a5; white-space: nowrap; }
.pp-ctrls { margin-left: auto; display: flex; }
.pp-ctrls span { width: 46.500px; display: flex; justify-content: center; }
.pp-tabs { height: 25px; flex: none; background: #b7472a; display: flex; align-items: center; color: #fff; font-size: 12px; line-height: 25px; }
.tab { padding: 0 14.700px; color: #f6e1d9; white-space: nowrap; }
.tab-file { padding: 0 21px 0 18px; }
.tab-on { background: #f1f1f1; color: #b7472a; padding: 0 13.500px; }
.tab-en { padding: 0 16.500px; }
.tell { margin-left: 12px; display: flex; align-items: center; gap: 6px; color: #f1d2c6; }
.login { margin-left: auto; margin-right: 12px; }
.share { width: 56px; height: 23px; background: #a33c22; margin-right: 18px; display: flex; align-items: center; justify-content: center; gap: 5px; line-height: 23px; }

.ribbon { position: relative; height: 94px; flex: none; display: flex; background: #f1f1f1; border-bottom: 1px solid #d0d0d0; color: #8c8c8c; }
.grp { display: flex; flex-direction: column; border-right: 1px solid #d8d8d8; flex: none; position: relative; }
.g1 { width: 116px; } .g2 { width: 122px; } .g3 { width: 227px; } .g4 { width: 301px; } .g5 { width: 330px; } .g6 { width: 75px; }
.grp-body { height: 74px; display: flex; flex: none; }
.grp-body.col, .col { display: flex; flex-direction: column; }
.grp-label { height: 20px; line-height: 20px; text-align: center; color: #444; }
.grp-label.shifted { padding-right: 16px; }
.launch { position: absolute; right: 5px; bottom: 5px; width: 8px; height: 8px; border: 1px solid #aaa; border-width: 0 1px 1px 0; }
.blk { color: #333; }
.caret { font-size: 9px; line-height: 10px; color: #666; display: block; text-align: center; }
.caret.side { display: inline-block; margin-left: 3px; color: #999; }
.w10 { width: 10px; } .w14 { width: 18px; }
.bigbtn { display: flex; flex-direction: column; align-items: center; flex: none; }
.paste { margin-left: 11px; width: 29px; padding-top: 9px; }
.paste span { line-height: 16px; }
.paste svg { margin-bottom: -1px; }
.paste .caret { margin-top: 4px; }
.rcol { display: flex; flex-direction: column; padding-top: 3px; flex: none; }
.rrow { height: 23px; display: flex; align-items: center; white-space: nowrap; }
.sic { width: 16px; height: 16px; margin-right: 2px; flex: none; }
.sic.n { margin-right: 4px; }
.g1 .rcol { margin-left: 9px; }
.newslide { margin-left: 4px; width: 50px; padding-top: 9px; }
.newslide .two { text-align: center; line-height: 15px; margin-top: 6px; white-space: nowrap; }
.g2 .rcol { margin-left: 4px; }

.fontrow { display: flex; align-items: center; padding: 11px 0 0 5px; height: 34px; }
.fbox { height: 23px; background: #fff; border: 1px solid #d0d0d0; display: flex; justify-content: flex-end; }
.fbox i { width: 13px; background: #e2e2e2; }
.fname { width: 93px; } .fsize { width: 49px; margin-left: 1px; }
.fa { font-size: 15px; color: #9a9a9a; line-height: 20px; }
.fa sup { font-size: 8px; line-height: 8px; }
.a-up { margin-left: 6px; } .a-dn { margin-left: 7px; font-size: 13px; }
.vsep { width: 1px; height: 22px; background: #d2d2d2; flex: none; margin: 0 6px; }
.s1 { margin: 0 4px 0 6px; }
.stylerow { display: flex; align-items: center; height: 24px; margin-top: 7px; margin-left: 3px; color: #9a9a9a; }
.cell { width: 22px; text-align: center; font-style: normal; font-size: 13px; }
.italic { font-style: italic; }
.sh { font-weight: 700; text-shadow: 1px 1px 1px #ccc; }
.abc { font-size: 10px; text-decoration: line-through; }
.av { font-size: 11px; text-decoration: underline; }
.big { font-size: 17px; }
.s2 { margin: 0 4px 0 5px; }

.paraleft { width: 163px; margin-left: 8px; flex: none; }
.pararow { display: flex; align-items: center; height: 22px; }
.pararow.one { margin-top: 9px; }
.pararow.two { margin-top: 9px; }
.pic { width: 16px; height: 16px; flex: none; }
.m7 { margin-left: 7px; }
.textcol { margin-left: 0; }
.gallery { margin: 6px 0 0 6px; width: 136px; height: 62px; background: #fff; border: 1px solid #c8c8c8; display: flex; flex: none; }
.gal-svg { flex: none; }
.gscroll { width: 13px; margin-left: auto; display: flex; flex-direction: column; border-left: 1px solid #d6d6d6; }
.gscroll span { flex: 1; font-size: 9px; line-height: 20px; text-align: center; background: #fafafa; border-bottom: 1px solid #d6d6d6; color: #666; }
.arrange { width: 48px; padding-top: 9px; }
.arrange span { margin-top: 4px; line-height: 16px; }
.quick { width: 48px; padding-top: 9px; }
.quick span { margin-top: 2px; line-height: 16px; white-space: nowrap; }
.shapecol { margin-left: 8px; }
.g6 .rcol { margin-left: 11px; }
.collapse { position: absolute; right: 10px; bottom: 3px; font-size: 12px; line-height: 14px; color: #555; }

.pp-work { height: 548px; flex: none; display: flex; background: #e8e8e8; }
.thumbs { width: 106px; flex: none; display: flex; overflow: hidden; border-right: 1px solid #d0d0d0; }
.thumb-list { width: 86px; flex: none; }
.trow { height: 40px; display: flex; align-items: center; }
.trow b { width: 30px; margin-top: -4px; text-align: right; font-size: 15px; font-weight: 400; color: #555; line-height: 20px; }
.trow.on b { color: #cf6a55; }
.tmb { width: 28px; height: 21px; margin: 10px 0 0 7px; background-color: #fff; border: 1px solid #dcdcdc; display: block; }
.trow.on .tmb { width: 32px; height: 26px; margin: 10px 0 0 5px; border: 3px solid #d2694e; }
.trow.last { height: 34px; }
.trow.last b { margin-top: 0; }
.t-dense { background-image: repeating-linear-gradient(#555 0 1px, #fff 1px 3px); background-size: 78% 70%; background-repeat: no-repeat; background-position: center; }
.t-text { background-image: repeating-linear-gradient(#888 0 1px, #fff 1px 4px); background-size: 78% 60%; background-repeat: no-repeat; background-position: center; }
.t-chart { background-image: repeating-linear-gradient(90deg, #ccc 0 1px, #fff 1px 8px); background-size: 80% 40%; background-repeat: no-repeat; background-position: center bottom 3px; }
.t-table { background-image: repeating-linear-gradient(90deg, #bbb 0 1px, #f7f7f7 1px 6px); background-size: 78% 55%; background-repeat: no-repeat; background-position: center; }
.t-few { background-image: repeating-linear-gradient(#aaa 0 1px, #fff 1px 7px); background-size: 70% 50%; background-repeat: no-repeat; background-position: center; }

.vscroll { width: 15px; flex: none; display: flex; flex-direction: column; padding-top: 2px; background: #dedede; }
.sbtn { height: 14px; flex: none; background: #fff; border: 1px solid #cfcfcf; font-size: 9px; line-height: 12px; text-align: center; color: #666; }
.strack { flex: 1; }
.sthumb { display: block; width: 15px; height: 66px; margin-top: 429px; background: #fff; border: 1px solid #c4c4c4; }
.pp-right { flex: 1; display: flex; flex-direction: column; min-width: 0; }
.canvas { height: 514px; display: flex; flex: none; background: #e6e6e6; }
.main-scroll { width: 17px; margin-left: auto; background: #eaeaea; padding-bottom: 20px; }
.main-scroll .sbtn { width: 15px; }
.strack.light { background: #e2e2e2; width: 15px; }
.sthumb.small { height: 18px; margin-top: 344px; }
.sbtn.flat { background: #eee; height: 17px; border: 0; }

.slide { margin: 5px 0 0 245px; width: 671px; height: 503px; flex: none; background: #fff; border: 1px solid #d8d8d8; color: #111; overflow: hidden; white-space: nowrap; }
.s-head { display: flex; align-items: center; height: 38px; margin-top: 24px; }
.s-arc { margin-left: 21px; margin-top: 6px; overflow: visible; }
.s-title { margin-left: 44px; display: flex; gap: 46px; font-size: 33px; line-height: 38px; color: #1a1ab2; letter-spacing: 4px; font-weight: 700; }
.s-rule { display: flex; align-items: flex-start; margin: 15px 0 0 45px; height: 8px; }
.s-rule i { width: 341px; height: 8px; background: #c00000; }
.s-rule em { width: 242px; height: 1px; background: #c00000; }
.s-case { display: flex; align-items: center; height: 38px; margin: 10px 0 0 28px; font-size: 26px; line-height: 38px; font-weight: 700; letter-spacing: 5.750px; }
.s-case.two { margin: 0 0 0 62px; }
.s-blue { color: #1414a8; letter-spacing: 2.500px; }
.s-colon { color: #1414a8; margin: 0 7px 0 3px; letter-spacing: 0; font-weight: 900; }
.s-red { color: #e01010; }
.s-body { margin-top: 8.500px; font-size: 24px; line-height: 29.700px; padding-left: 61px; letter-spacing: .3px; }
.s-body .first { margin-left: -13px; }
.s-dark { color: #a31515; }
.s-body .tight { margin-top: -3px; }
.s-theory { margin-left: 42px; margin-top: -4.500px; font-size: 24px; line-height: 39.800px; letter-spacing: .15px; }
.s-theory small { font-size: 10px; color: #888; letter-spacing: 0; }

.notes { height: 34px; flex: none; padding-left: 11px; border-top: 1px solid #c8c8c8; font-size: 13px; line-height: 30px; color: #555; background: #efefef; }
.pp-status { height: 22px; flex: none; display: flex; align-items: center; padding-bottom: 1px; background: #f1f1f1; border-top: 1px solid #c8c8c8; color: #666; white-space: nowrap; }
.st-a { margin-left: 8px; width: 159px; }
.st-b { margin-left: 8px; }
.st-c { margin-left: 18px; }
.st-note { margin-left: 533px; display: flex; align-items: center; gap: 7px; }
.st-cmt { margin-left: 21px; display: flex; align-items: center; gap: 5px; }
.vb { width: 38px; height: 21px; display: flex; align-items: center; justify-content: center; }
.vb.on { background: #c8c8c8; margin-left: 19px; }
.zm { display: flex; align-items: center; margin-left: 6px; gap: 3px; font-size: 14px; }
.zm b { font-weight: 700; line-height: 12px; }
.zm-track { position: relative; width: 102px; height: 1px; background: #888; }
.zm-track i { position: absolute; left: 35px; top: -9px; width: 3px; height: 19px; background: #666; }
.zm-pct { margin-left: 15px; }
.zm-fit { margin-left: 14px; }

/* Recorder */
.rec { position: absolute; left: 1449px; top: 194px; width: 440px; height: 603px; background: #fff; border: 1px solid #7fc7e4; color: #444; font-size: 12px; letter-spacing: .25px; display: flex; flex-direction: column; }
.rec-top { height: 44px; flex: none; display: flex; align-items: center; padding: 0 4px 0 1px; }
.rc { width: 36px; display: flex; align-items: center; justify-content: center; flex: none; }
.rc-up { width: 20px; height: 20px; border-radius: 50%; background: #6e6e6e; color: #eee; font-size: 8px; line-height: 20px; text-align: center; }
.rc-red { width: 18px; height: 18px; border-radius: 50%; background: #c8171d; }
.rc-pause { width: 13px; height: 16px; border: solid #e8e8e8; border-width: 0 4px; }
.rc-min { width: 15px; height: 2px; background: #777; }
.rec-time { flex: 1; text-align: center; font-size: 13px; color: #333; letter-spacing: 0; }
.rec-tools { height: 44px; flex: none; display: flex; align-items: center; padding: 0 4px 0 9px; }
.ringed { width: 30px; height: 30px; margin: 0 3px; border: 1px solid #47a9bd; border-radius: 50%; }
.blue-ic { color: #7bc0e4; }
.rspace { flex: 1; }
.gear-blue { color: #2b9bd8; }
.rec-body { flex: none; height: 450px; margin-top: 3px; display: flex; }
.rec-side { width: 50px; flex: none; padding-left: 6px; display: flex; flex-direction: column; }
.rs { width: 35px; height: 29px; display: flex; align-items: center; justify-content: center; color: #333; flex: none; }
.rs.on { background: #2b9bd8; }
.qm { font-size: 18px; font-weight: 700; }
.rec-main { width: 375px; flex: none; border-left: 1px solid #bbb; margin-top: 2px; padding-left: 10px; display: flex; flex-direction: column; }
.rec-main b { font-size: 13px; color: #333; font-weight: 700; letter-spacing: 0; }
.btn { border: 1px solid #cfcfcf; display: flex; align-items: center; justify-content: center; flex: none; padding-bottom: 1px; }
.r-head { display: flex; justify-content: space-between; align-items: center; height: 18px; }
.r-head b { margin-top: -2px; }
.b-prev { width: 67px; height: 18px; }
.r-input { height: 21px; margin-top: 7px; border: 1px solid #cfcfcf; padding-left: 5px; line-height: 17px; }
.r-icons { height: 35px; margin-top: 8px; border: 1px solid #cfcfcf; display: grid; grid-template-columns: repeat(7, 1fr); }
.r-icons span { display: flex; align-items: center; justify-content: center; }
.r-icons .on { background: #2b9bd8; }
.r-sub { height: 18px; margin-top: 10px; line-height: 18px; }
.r-tabs { height: 23px; margin-top: 8px; border: 1px solid #cfcfcf; padding: 1px; display: flex; }
.r-tabs span { width: 70px; text-align: center; line-height: 17px; }
.r-tabs .on { background: #2b9bd8; color: #fff; width: 69px; }
.r-tabs .wide { width: auto; margin-left: 5px; }
.r-sel-row { display: flex; justify-content: space-between; height: 22px; margin-top: 10px; }
.r-select { position: relative; width: 266px; border: 1px solid #cfcfcf; padding-left: 6px; line-height: 20px; }
.r-select i { position: absolute; right: 6px; top: 0; color: #333; font-size: 11px; }
.b-log { width: 93px; }
.r-fps { height: 20px; margin-top: 11px; display: flex; align-items: center; padding-bottom: 1px; }
.r-fps .lab { width: 54px; }
.slider { position: relative; height: 4px; background: #ccc; }
.slider i { position: absolute; display: block; }
.fill { background: #2b9bd8; height: 4px; }
.knob { background: #fff; border: 1px solid #c8c8c8; width: 11px; height: 22px; top: -9px; }
.s-fps { width: 252px; }
.s-fps .fill { left: 61px; width: 34px; }
.s-fps .knob { left: 72px; }
.chk { width: 15px; height: 15px; border: 1px solid #d0d0d0; display: flex; align-items: center; justify-content: center; flex: none; color: #222; font-size: 12px; font-weight: 700; }
.r-fps .chk { margin: 0 5px 0 10px; }
.r-qual { height: 22px; margin-top: 11px; display: flex; align-items: center; }
.r-qual .lab { width: 54px; }
.qval { width: 35px; }
.s-q { width: 270px; }
.s-q .fill { left: 161px; width: 54px; }
.s-q .knob { left: 106px; }
.r-hr { width: 100%; height: 1px; margin: 14px 0 0; border: 0; background: #e2e2e2; flex: none; }
.r-hr.thick { height: 2px; margin-top: 15px; background: #e6e6e6; }
.r-av { display: flex; height: 74px; margin-top: 12px; flex: none; }
.r-audio { width: 70px; flex: none; }
.r-audio b { display: block; line-height: 20px; }
.mic { width: 55px; height: 40px; margin-top: 4px; border: 1px solid #cfcfcf; display: flex; align-items: center; padding-left: 12px; gap: 8px; font-size: 11px; color: #333; }
.r-webcam { flex: 1; }
.r-webcam b { display: block; line-height: 16px; margin-top: 1px; }
.wc-row { display: flex; align-items: center; height: 21px; margin-top: 8px; }
.r-select.wc { width: 199px; height: 21px; margin-left: 8px; line-height: 19px; }
.b-wprev { width: 67px; height: 21px; margin-left: 3px; }
.wc-check { display: flex; align-items: center; gap: 4px; height: 16px; margin-top: 11px; white-space: nowrap; }
.rec-main .r-shot { display: block; line-height: 18px; margin-top: 7px; }
.r-shots { display: flex; align-items: center; height: 30px; margin-top: 7px; }
.r-shots .ringed { margin: 0 0 0 3px; }
.shot2 { width: 40px; margin-left: 1px; }
.pill { width: 68px; height: 25px; margin-left: 9px; border: 1px solid #cfcfcf; border-radius: 13px; text-align: center; line-height: 22px; }
.pencil { margin-left: 21px; }
.rec-out { height: 21px; margin: 10px 5px 0 4px; flex: none; display: flex; border: 1px solid #cfcfcf; }
.out-a { width: 118px; display: flex; align-items: center; gap: 10px; padding-left: 5px; border-right: 2px solid #cfcfcf; flex: none; white-space: nowrap; }
.out-b { flex: 1; }
.out-c { width: 49px; border-left: 2px solid #cfcfcf; display: flex; align-items: center; justify-content: center; gap: 3px; flex: none; padding-bottom: 2px; }
.out-c i { width: 4px; height: 4px; border-radius: 50%; background: #333; }
.rec-stat { flex: 1; display: flex; align-items: center; padding: 0 11px 4px 12px; gap: 6px; }
.ok { color: #67b86a; }
.stable { margin-left: auto; color: #3aa0c8; }
.cursor { position: absolute; left: 338px; top: 419px; }

/* Taskbar */
.taskbar { position: absolute; left: 0; top: 1041px; width: 1920px; height: 39px; display: flex; align-items: center; padding-bottom: 1px; background: linear-gradient(#1c1c1c, #060606); border-top: 1px solid #5a5a5a; }
.orb { width: 36px; height: 36px; margin-left: 9px; border-radius: 50%; flex: none; display: flex; align-items: center; justify-content: center; background: radial-gradient(circle at 50% 40%, #7fb4dc 0 22%, #3e7fb4 50%, #24507a 75%, #13304c); }
.tb-apps { display: flex; gap: 4px; margin-left: 15px; }
.app { width: 58px; height: 37px; display: flex; align-items: center; justify-content: center; flex: none; }
.app.bg { background: linear-gradient(#565656, #2a2a2a); border: 1px solid #444; border-radius: 3px; }
.app.red { background: linear-gradient(#c86050, #7a4a40); }
.app.light { background: linear-gradient(#bcbcbc, #777); }
.a-grid { width: 30px; height: 36px; background: repeating-linear-gradient(#d8d8d8 0 1px, #b02020 1px 3px); border: 3px solid #a81c1c; }
.tray { margin-left: auto; display: flex; align-items: center; height: 100%; }
.ti { width: 24px; display: flex; align-items: center; justify-content: center; flex: none; }
.t-key { margin-right: 12px; }
.t-usb { margin-right: 6px; }
.clock { width: 81px; display: flex; flex-direction: column; align-items: center; font-size: 12px; line-height: 18px; color: #e8e8e8; }
.notif { position: relative; width: 37px; height: 100%; display: flex; align-items: center; padding-left: 8px; }
.notif b { position: absolute; left: 14px; top: 3px; width: 23px; height: 14px; background: #d81e1e; color: #fff; font-size: 10px; font-weight: 400; line-height: 14px; text-align: center; }
.showdesk { width: 23px; height: 100%; background: linear-gradient(#555, #222); border: 1px solid #555; }
```
